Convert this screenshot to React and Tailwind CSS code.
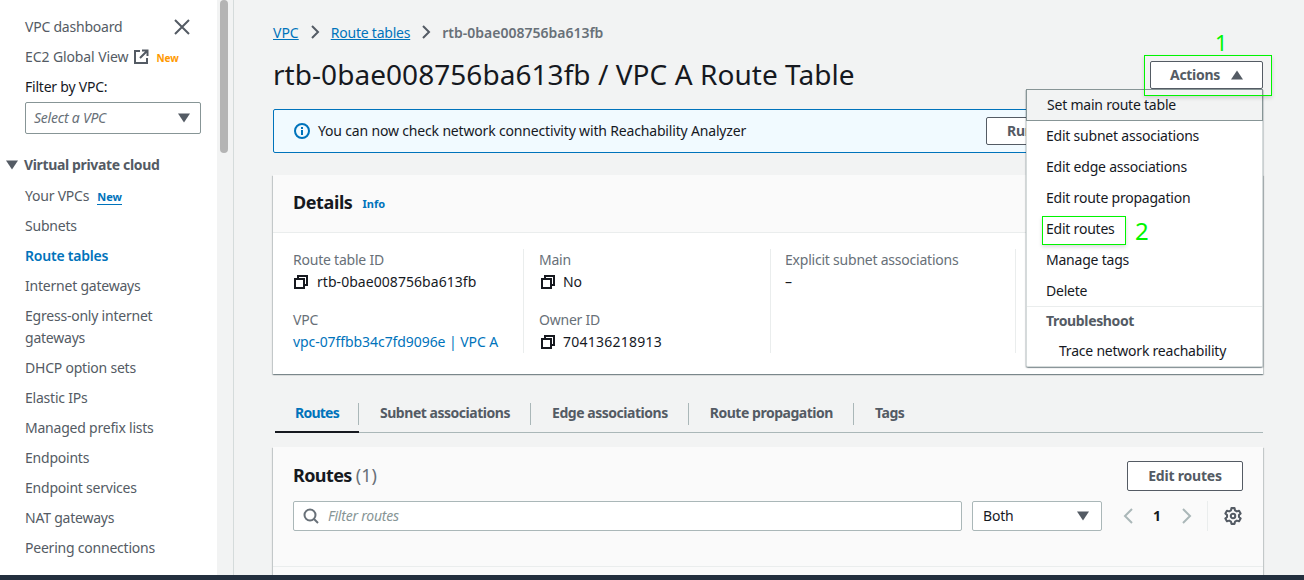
const Caret = ({ className = "", up = false }) => (
  <svg width="12" height="10" viewBox="0 0 12 10" className={className}>
    <path d={up ? "M6 0.5L12 9.5H0Z" : "M0 0.5H12L6 9.5Z"} fill="#545b64" />
  </svg>
);

const Copy = () => (
  <svg width="16" height="16" viewBox="0 0 16 16" fill="none" stroke="#16191f" strokeWidth="2" className="shrink-0">
    <rect x="2" y="5" width="9" height="9" />
    <path d="M5 4V2H14V11H12" />
  </svg>
);

const NavItem = ({ children, active, className = "" }) => (
  <div className={`py-[4px] text-[14px] leading-[22px] ${active ? "font-semibold text-[#0073bb]" : "text-[#545b64]"} ${className}`}>{children}</div>
);

const Sidebar = () => (
  <aside className="w-[217px] shrink-0 bg-white pl-[25px] pt-[12px] relative h-full overflow-hidden">
    <div className="flex items-center justify-between pr-[27px]">
      <NavItem>VPC dashboard</NavItem>
      <svg width="16" height="16" viewBox="0 0 16 16" stroke="#545b64" strokeWidth="2">
        <path d="M1 1L15 15M15 1L1 15" />
      </svg>
    </div>
    <div className="flex items-center">
      <NavItem className="tracking-[-0.1px]">EC2 Global View</NavItem>
      <svg width="16" height="16" viewBox="0 0 16 16" fill="none" stroke="#545b64" strokeWidth="2" className="ml-[5px]">
        <path d="M7 2H2V14H14V9M9 1.5H14.5V7M14 2L7 9" />
      </svg>
      <span className="ml-[7px] mt-[2px] text-[10px] font-bold tracking-normal text-[#ff9900]">New</span>
    </div>
    <div className="py-[4px] text-[14px] leading-[22px] text-[#16191f]">Filter by VPC:</div>
    <div className="flex h-[32px] w-[176px] items-center justify-between rounded-[2px] border border-[#879596] bg-white pb-[2px] pl-[8px] pr-[10px] text-[14px] italic text-[#687078]">
      Select a VPC
      <Caret className="mt-[2px]" />
    </div>
    <div className="mt-[20px] -ml-[19px] flex items-center">
      <Caret />
      <span className="ml-[6px] text-[14px] font-bold leading-[22px] tracking-[-0.35px] text-[#545b64]">Virtual private cloud</span>
    </div>
    <div className="mt-[5px]">
      <NavItem>
        Your VPCs
        <span className="ml-[8px] border-b border-[#0073bb] text-[11px] font-bold leading-none tracking-normal text-[#0073bb]">New</span>
      </NavItem>
      <NavItem>Subnets</NavItem>
      <NavItem active>Route tables</NavItem>
      <NavItem>Internet gateways</NavItem>
      <NavItem>Egress-only internet<br />gateways</NavItem>
      <NavItem>DHCP option sets</NavItem>
      <NavItem>Elastic IPs</NavItem>
      <NavItem>Managed prefix lists</NavItem>
      <NavItem>Endpoints</NavItem>
      <NavItem>Endpoint services</NavItem>
      <NavItem>NAT gateways</NavItem>
      <NavItem>Peering connections</NavItem>
    </div>
  </aside>
);

const Field = ({ label, children, className = "" }) => (
  <div className={className}>
    <div className="text-[14px] leading-[22px] text-[#687078]">{label}</div>
    <div className="text-[14px] leading-[22px] text-[#16191f]">{children}</div>
  </div>
);

const CopyValue = ({ children, className = "gap-[8px]", textClass = "" }) => (
  <div className={`flex items-center ${className}`}><Copy /><span className={textClass}>{children}</span></div>
);

const cardShadow = "shadow-[0_1px_1px_0_rgba(0,28,36,0.3),1px_1px_1px_0_rgba(0,28,36,0.15),-1px_1px_1px_0_rgba(0,28,36,0.15)]";

const Details = () => (
  <section className={`mt-[22px] h-[199px] bg-white ${cardShadow}`}>
    <div className="flex h-[58px] items-center border-b border-[#eaeded] bg-[#fafafa] px-[20px] pb-[2px]">
      <h2 className="text-[18px] font-bold tracking-[-0.4px] text-[#16191f]">Details</h2>
      <span className="ml-[10px] mt-[3px] text-[11px] font-bold tracking-normal text-[#0073bb]">Info</span>
    </div>
    <div className="grid grid-cols-[231px_247px_245px_1fr] pl-[20px] pt-[16px]">
      <div className="flex h-[104px] flex-col gap-[16px] border-r border-[#eaeded]">
        <Field label="Route table ID"><CopyValue textClass="tracking-[0.05px]">rtb-0bae008756ba613fb</CopyValue></Field>
        <Field label="VPC"><span className="tracking-[-0.07px] text-[#0073bb]">vpc-07ffbb34c7fd9096e | VPC A</span></Field>
      </div>
      <div className="flex h-[104px] flex-col gap-[16px] border-r border-[#eaeded] pl-[15px]">
        <Field label="Main"><CopyValue className="ml-[1px] gap-[7px]">No</CopyValue></Field>
        <Field label="Owner ID"><CopyValue className="ml-[1px] gap-[7px]" textClass="tracking-[0.25px]">704136218913</CopyValue></Field>
      </div>
      <div className="h-[104px] border-r border-[#eaeded] pl-[14px]">
        <Field label="Explicit subnet associations">–</Field>
      </div>
    </div>
  </section>
);

const Tab = ({ children, active, last }) => (
  <div className={`relative flex h-full items-center pb-[2px] text-[14px] font-bold ${active ? "px-[20px] tracking-[-0.75px] text-[#0073bb]" : "px-[21px] tracking-[-0.47px] text-[#545b64]"}`}>
    {children}
    {!last && <span className="absolute right-0 top-[8px] h-[22px] w-px bg-[#aab7b8]" />}
    {active && <span className="absolute inset-x-0 bottom-[-1px] h-[2px] bg-[#16191f]" />}
  </div>
);

const Tabs = () => (
  <div className="ml-[2px] mt-[21px] flex h-[38px] border-b border-[#aab7b8]">
    <Tab active>Routes</Tab>
    <Tab>Subnet associations</Tab>
    <Tab>Edge associations</Tab>
    <Tab>Route propagation</Tab>
    <Tab last>Tags</Tab>
  </div>
);

const Routes = () => (
  <section className={`mt-[14px] h-[140px] bg-[#fafafa] ${cardShadow}`}>
    <div className="h-[120px] border-b border-[#eaeded] px-[20px] pt-[14px]">
      <div className="flex h-[30px] items-center justify-between">
        <h2 className="pb-[2px] text-[18px] font-bold tracking-[-0.6px] text-[#16191f]">Routes <span className="font-normal tracking-normal text-[#687078]">(1)</span></h2>
        <button className="h-[30px] w-[116px] rounded-[2px] border border-[#545b64] bg-white pb-[2px] text-[14px] font-bold tracking-[-0.2px] text-[#545b64]">Edit routes</button>
      </div>
      <div className="mt-[10px] flex h-[30px] items-center">
        <div className="flex h-[30px] w-[669px] items-center rounded-[2px] border border-[#aab7b8] bg-white pl-[9px] text-[14px] italic text-[#879596]">
          <svg width="16" height="16" viewBox="0 0 16 16" fill="none" stroke="#687078" strokeWidth="2">
            <circle cx="7" cy="7" r="5.5" /><path d="M11 11L15 15" />
          </svg>
          <span className="ml-[9px] pb-[2px]">Filter routes</span>
        </div>
        <div className="ml-[10px] flex h-[30px] w-[130px] items-center justify-between rounded-[2px] border border-[#aab7b8] bg-white pl-[10px] pr-[12px] text-[14px] text-[#16191f]">
          <span className="pb-[2px]">Both</span> <Caret />
        </div>
        <svg width="10" height="16" viewBox="0 0 10 16" fill="none" stroke="#aab7b8" strokeWidth="2" className="ml-[21px]"><path d="M9 1L2 8L9 15" /></svg>
        <span className="ml-[20px] w-[9px] pb-[2px] text-[14px] font-bold text-[#16191f]">1</span>
        <svg width="10" height="16" viewBox="0 0 10 16" fill="none" stroke="#aab7b8" strokeWidth="2" className="ml-[20px]"><path d="M1 1L8 8L1 15" /></svg>
        <span className="ml-[15px] h-[30px] w-px bg-[#eaeded]" />
        <svg width="18" height="18" viewBox="0 0 16 16" fill="none" stroke="#545b64" strokeWidth="1.8" className="ml-[16px]">
          <path d="M6.6 1h2.8l.4 2 1.6.9 2-.6 1.4 2.4-1.5 1.4v1.8l1.5 1.4-1.4 2.4-2-.6-1.6.9-.4 2H6.6l-.4-2-1.6-.9-2 .6L1.2 10.3l1.5-1.4V7.1L1.2 5.7l1.4-2.4 2 .6 1.6-.9z" strokeLinejoin="round" />
          <circle cx="8" cy="8" r="2" />
        </svg>
      </div>
    </div>
  </section>
);

const MenuRow = ({ children, h = "h-[31px]" }) => (
  <div className={`flex ${h} items-center pb-[2px] pl-[19px]`}>{children}</div>
);

const Menu = () => (
  <div className={`absolute left-[792px] top-[89px] w-[237px] rounded-b-[2px] border border-t-0 border-[#d5dbdb] bg-white text-[14px] text-[#16191f] ${cardShadow}`}>
    <div className="-mx-px flex h-[32px] items-center border border-[#879596] bg-[#f2f3f3] pb-[2px] pl-[20px]">Set main route table</div>
    <MenuRow>Edit subnet associations</MenuRow>
    <MenuRow>Edit edge associations</MenuRow>
    <MenuRow>Edit route propagation</MenuRow>
    <MenuRow>Edit routes</MenuRow>
    <MenuRow>Manage tags</MenuRow>
    <MenuRow h="h-[30px]">Delete</MenuRow>
    <div className="flex h-[30px] items-center border-t border-[#eaeded] pb-[2px] pl-[19px] font-bold tracking-[-0.35px] text-[#545b64]">Troubleshoot</div>
    <div className="flex h-[30px] items-center pb-[2px] pl-[32px]">Trace network reachability</div>
  </div>
);

export default function App() {
  return (
    <div className="relative h-[580px] w-[1304px] overflow-hidden bg-[#f2f3f3] font-['Noto_Sans','Open_Sans',sans-serif] tracking-[-0.22px]">
      <div className="flex h-[575px]">
        <Sidebar />
        <div className="flex w-[17px] shrink-0 justify-center border-r border-[#d5dbdb] bg-[#f2f3f3] pr-[1px]">
          <div className="ml-[-1px] h-[153px] w-[8px] rounded-[4px] bg-[#b4b4b4]" />
        </div>
        <main className="relative flex-1 overflow-hidden pl-[39px] pr-[41px]">
          <nav className="flex h-[64px] items-center text-[14px] text-[#0073bb]">
            <span className="tracking-normal underline">VPC</span>
            <svg width="10" height="14" viewBox="0 0 10 14" fill="none" stroke="#545b64" strokeWidth="2" className="mx-[11px]"><path d="M2 1L8 7L2 13" /></svg>
            <span className="underline">Route tables</span>
            <svg width="10" height="14" viewBox="0 0 10 14" fill="none" stroke="#545b64" strokeWidth="2" className="mx-[11px]"><path d="M2 1L8 7L2 13" /></svg>
            <span className="font-semibold tracking-normal text-[#687078]">rtb-0bae008756ba613fb</span>
          </nav>
          <div className="flex h-[22px] items-center justify-between">
            <h1 className="-mt-[2px] text-[28px] font-normal leading-[22px] tracking-[0.05px] text-[#16191f]">rtb-0bae008756ba613fb / VPC A Route Table</h1>
            <button className="flex h-[28px] w-[113px] items-center justify-center gap-[11px] rounded-[2px] border border-[#545b64] bg-white text-[14px] font-bold tracking-[-0.3px] text-[#545b64]">
              <span className="pb-[2px]">Actions</span> <Caret up />
            </button>
          </div>
          <div className="mt-[23px] flex h-[44px] items-center justify-between rounded-[2px] border border-[#0073bb] bg-[#f1faff] pl-[20px] pr-[20px] text-[14px] text-[#16191f]">
            <div className="flex items-center">
              <svg width="16" height="16" viewBox="0 0 16 16" fill="none" stroke="#0073bb" strokeWidth="2">
                <circle cx="8" cy="8" r="7" /><path d="M8 7v5M8 4v2" />
              </svg>
              <span className="ml-[8px] pb-[2px] tracking-[-0.17px]">You can now check network connectivity with Reachability Analyzer</span>
            </div>
            <button className="h-[28px] w-[256px] rounded-[2px] border border-[#545b64] bg-white pb-[2px] pl-[20px] text-left font-bold text-[#545b64]">Run Reachability Analyzer</button>
          </div>
          <Details />
          <Tabs />
          <Routes />
          <Menu />
          <div className="absolute left-[910px] top-[55px] h-[41px] w-[128px] border border-[#00f500] shadow-[0_2px_4px_rgba(0,0,0,0.15)]" />
          <span className="absolute left-[981px] top-[27px] text-[22px] leading-[30px] text-[#00f500]">1</span>
          <div className="absolute left-[808px] top-[216px] h-[29px] w-[84px] border border-[#00f500] shadow-[0_2px_4px_rgba(0,0,0,0.15)]" />
          <span className="absolute left-[901px] top-[216px] text-[24px] leading-[30px] text-[#00f500]">2</span>
        </main>
      </div>
      <div className="h-[5px] bg-[#232f3e]" />
    </div>
  );
}
